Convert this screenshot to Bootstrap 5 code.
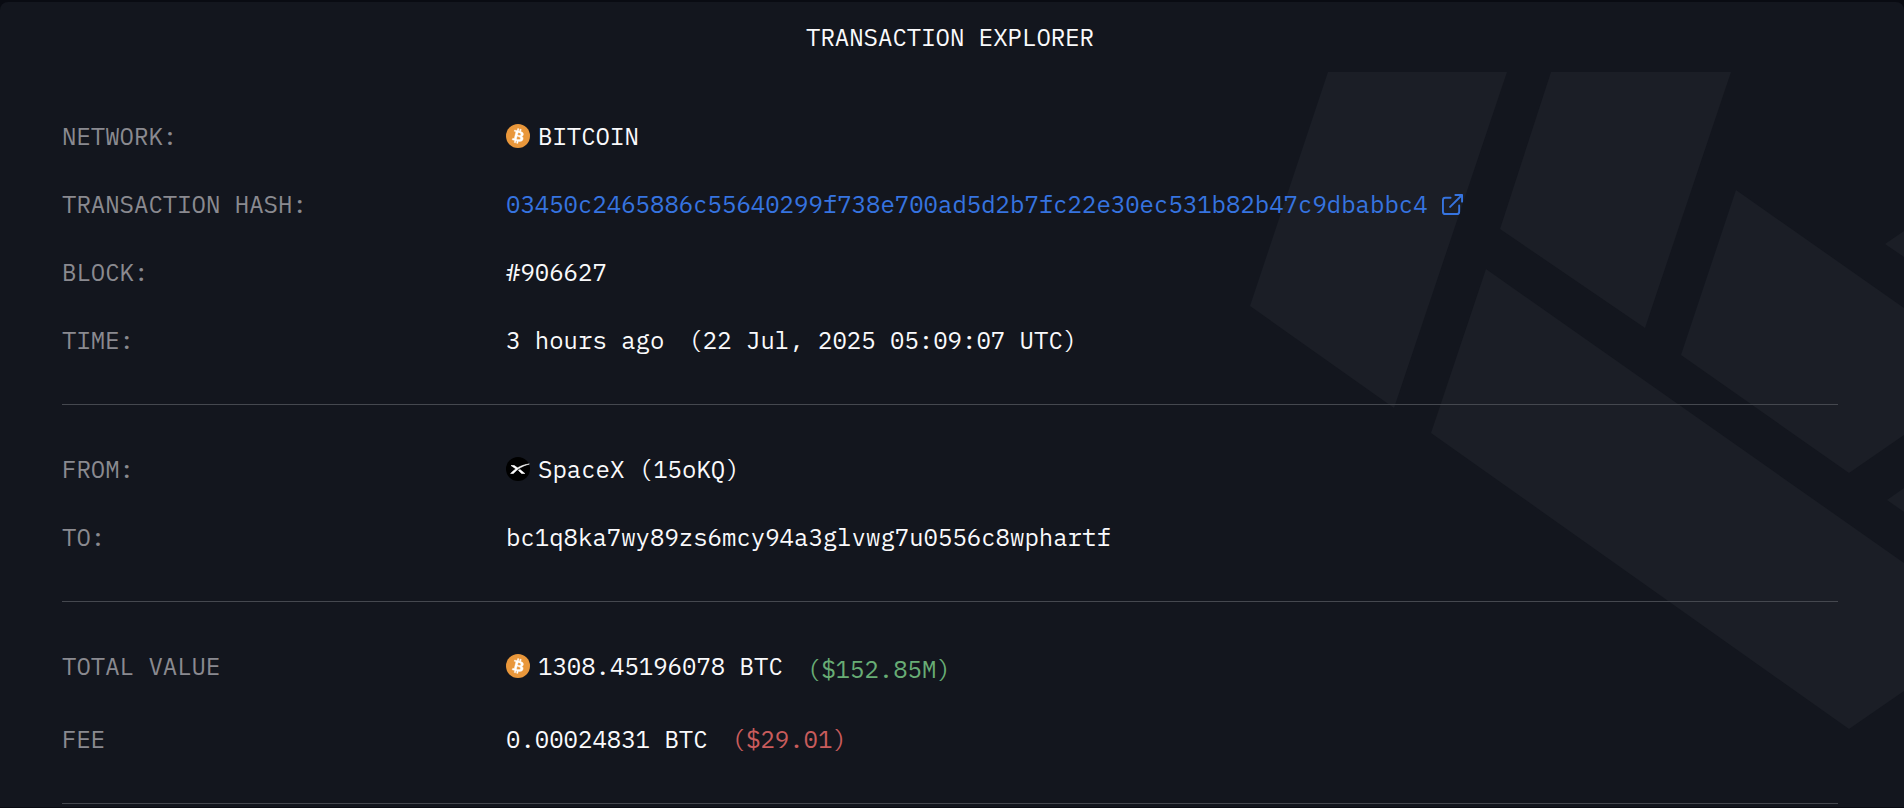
<!DOCTYPE html>
<html lang="en">
<head>
<meta charset="utf-8">
<meta name="viewport" content="width=device-width, initial-scale=1">
<title>Transaction Explorer</title>
<link href="https://cdn.jsdelivr.net/npm/bootstrap@5.3.0/dist/css/bootstrap.min.css" rel="stylesheet">
<style>
  body { background: #090b12; color: #fafafc; font-family: "IBM Plex Mono", "Liberation Mono", monospace; font-size: 24px; line-height: 36px; padding-top: 2px; }
  .explorer { background: #13161e; border-radius: 8px 8px 0 0; }
  .explorer-head { padding: 17px 66px 17px 62px; }
  .explorer-head h1 { font-size: 24px; line-height: 36px; font-weight: 400; }
  .explorer-body { padding: 0 66px 3px 62px; }
  .watermark { width: 660px; height: 660px; z-index: 0; }
  .facts { z-index: 1; padding: 30px 0; border-bottom: 1px solid #45484f; }
  .fact { padding: 16px 0; }
  .fact dt { font-weight: 400; color: #8a8a90; }
  .fact dd { min-width: 0; column-gap: 24px; overflow-wrap: anywhere; }
  .fact-total { padding-bottom: 18px; }
  .coin { width: 24px; height: 24px; flex: none; }
  .hash-link { color: #3674e0; }
  .hash-link svg { width: 21px; height: 21px; margin-left: 14px; vertical-align: -2px; }
  .usd-in { color: #68ad75; padding-top: 3px; }
  .usd-fee { color: #c95c5c; }
</style>
</head>
<body>
<svg width="0" height="0" class="position-absolute" aria-hidden="true">
  <symbol id="btc" viewBox="0 0 32 32">
    <circle cx="16" cy="16" r="16" fill="#e9973b"/>
    <path fill="#fff" stroke="#fff" stroke-width=".5" d="M23.19 14.02c.31-2.1-1.29-3.23-3.47-3.98l.71-2.84-1.73-.43-.69 2.76-1.38-.33.69-2.78-1.72-.43-.71 2.84-1.1-.26-2.38-.6-.46 1.85s1.28.29 1.26.31c.7.17.82.64.8 1l-.81 3.24.18.06-.18-.05-1.13 4.53c-.09.21-.3.53-.79.41.02.02-1.26-.32-1.26-.32l-.86 1.98 2.25.56 1.23.32-.72 2.87 1.73.43.71-2.84 1.38.36-.71 2.83 1.73.43.72-2.87c2.95.56 5.16.33 6.09-2.33.75-2.14-.04-3.38-1.58-4.18 1.12-.26 1.97-1 2.21-2.54zm-3.95 5.54c-.53 2.14-4.14.98-5.31.69l.95-3.8c1.17.29 4.92.87 4.36 3.11zm.54-5.57c-.49 1.95-3.49.96-4.47.71l.86-3.44c.98.25 4.12.7 3.61 2.73z"/>
  </symbol>
</svg>

<main class="explorer">
  <header class="explorer-head text-center"><h1 class="m-0">TRANSACTION EXPLORER</h1></header>

  <div class="explorer-body position-relative overflow-hidden">
    <svg class="watermark position-absolute top-0 end-0" viewBox="0 0 660 660" fill="#1b1e26" aria-hidden="true">
      <path d="M84 0H263L150 336 6 234Z"/>
      <path d="M307 0H487L401 256 256 157Z"/>
      <path d="M492 118 660 236V363L605 401 437 283Z"/>
      <path d="M242 197 660 491V619L605 657 187 361Z"/>
      <path d="M641 172 660 159V185Z"/>
      <path d="M643 428 660 416V440Z"/>
    </svg>

    <dl class="facts position-relative m-0">
      <div class="fact row g-0">
        <dt class="col-3">NETWORK:</dt>
        <dd class="col-9 m-0"><span class="d-flex align-items-center gap-2"><svg class="coin" aria-hidden="true"><use href="#btc"/></svg>BITCOIN</span></dd>
      </div>
      <div class="fact row g-0">
        <dt class="col-3">TRANSACTION HASH:</dt>
        <dd class="col-9 m-0"><a href="#" class="hash-link text-decoration-none">03450c2465886c55640299f738e700ad5d2b7fc22e30ec531b82b47c9dbabbc4<svg viewBox="0 0 22 22" fill="none" stroke="currentColor" stroke-width="2" stroke-linecap="round" stroke-linejoin="round" aria-hidden="true"><path d="M9 4H3.500Q1 4 1 6.500V18.500Q1 21 3.500 21H15.500Q18 21 18 18.500V12"/><path d="M14 1H21V8M21 1 8.500 13.500"/></svg></a></dd>
      </div>
      <div class="fact row g-0">
        <dt class="col-3">BLOCK:</dt>
        <dd class="col-9 m-0">#906627</dd>
      </div>
      <div class="fact row g-0">
        <dt class="col-3">TIME:</dt>
        <dd class="col-9 m-0 d-flex flex-wrap"><span>3 hours ago</span><span>(22 Jul, 2025 05:09:07 UTC)</span></dd>
      </div>
    </dl>

    <dl class="facts position-relative m-0">
      <div class="fact row g-0">
        <dt class="col-3">FROM:</dt>
        <dd class="col-9 m-0"><span class="d-flex align-items-center gap-2"><svg class="coin" viewBox="0 0 24 24" aria-hidden="true"><circle cx="12" cy="12" r="12" fill="#000"/><path fill="#fff" stroke="#fff" stroke-width=".6" d="M5 8.500H8.200L11.400 10.800 10 11.900ZM12.500 13.500 14 12.500 18.800 16.500H15.600ZM4.600 16.500C9 12 14.500 8 23.300 7 16 9 11.500 12 7.300 16.500Z"/></svg>SpaceX (15oKQ)</span></dd>
      </div>
      <div class="fact row g-0">
        <dt class="col-3">TO:</dt>
        <dd class="col-9 m-0">bc1q8ka7wy89zs6mcy94a3glvwg7u0556c8wphartf</dd>
      </div>
    </dl>

    <dl class="facts position-relative m-0">
      <div class="fact fact-total row g-0">
        <dt class="col-3">TOTAL VALUE</dt>
        <dd class="col-9 m-0 d-flex flex-wrap align-items-start"><span class="d-flex align-items-center gap-2"><svg class="coin" aria-hidden="true"><use href="#btc"/></svg>1308.45196078 BTC</span><span class="usd-in">($152.85M)</span></dd>
      </div>
      <div class="fact row g-0">
        <dt class="col-3">FEE</dt>
        <dd class="col-9 m-0 d-flex flex-wrap"><span>0.00024831 BTC</span><span class="usd-fee">($29.01)</span></dd>
      </div>
    </dl>
  </div>
</main>
<script src="https://cdn.jsdelivr.net/npm/bootstrap@5.3.0/dist/js/bootstrap.bundle.min.js"></script>
</body>
</html>
